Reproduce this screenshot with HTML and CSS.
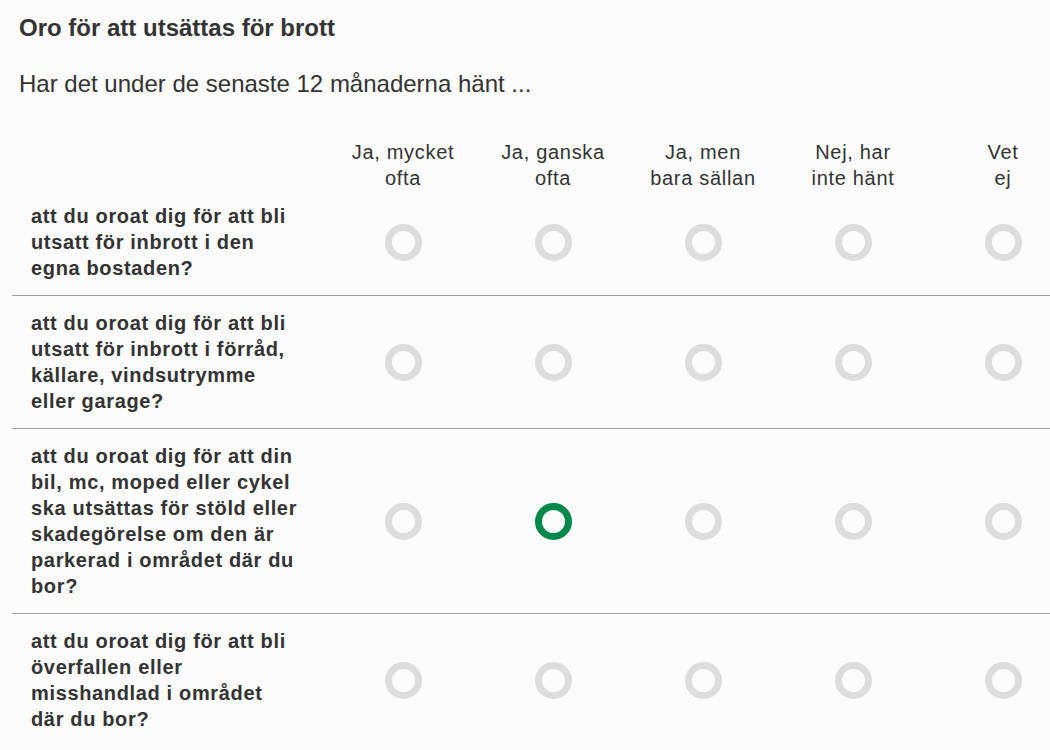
FILE: index.html
```html
<!DOCTYPE html>
<html lang="sv">
<head>
<meta charset="utf-8">
<title>Oro för att utsättas för brott</title>
<link rel="stylesheet" href="styles.css">
</head>
<body>
<div class="page">
  <h1 class="title">Oro för att utsättas för brott</h1>
  <p class="lead">Har det under de senaste 12 månaderna hänt ...</p>
  <div class="matrix">
    <div class="row head">
      <div class="label"></div>
      <div class="opt">Ja, mycket<br>ofta</div>
      <div class="opt">Ja, ganska<br>ofta</div>
      <div class="opt">Ja, men<br>bara sällan</div>
      <div class="opt">Nej, har<br>inte hänt</div>
      <div class="opt">Vet<br>ej</div>
    </div>
    <div class="row">
      <div class="label">att du oroat dig för att bli utsatt för inbrott i den egna bostaden?</div>
      <div class="cell"><span class="radio"></span></div>
      <div class="cell"><span class="radio"></span></div>
      <div class="cell"><span class="radio"></span></div>
      <div class="cell"><span class="radio"></span></div>
      <div class="cell"><span class="radio"></span></div>
    </div>
    <div class="row">
      <div class="label">att du oroat dig för att bli utsatt för inbrott i förråd, källare, vindsutrymme eller garage?</div>
      <div class="cell"><span class="radio"></span></div>
      <div class="cell"><span class="radio"></span></div>
      <div class="cell"><span class="radio"></span></div>
      <div class="cell"><span class="radio"></span></div>
      <div class="cell"><span class="radio"></span></div>
    </div>
    <div class="row">
      <div class="label">att du oroat dig för att din bil, mc, moped eller cykel ska utsättas för stöld eller skadegörelse om den är parkerad i området där du bor?</div>
      <div class="cell"><span class="radio"></span></div>
      <div class="cell"><span class="radio checked"></span></div>
      <div class="cell"><span class="radio"></span></div>
      <div class="cell"><span class="radio"></span></div>
      <div class="cell"><span class="radio"></span></div>
    </div>
    <div class="row">
      <div class="label">att du oroat dig för att bli överfallen eller misshandlad i området där du bor?</div>
      <div class="cell"><span class="radio"></span></div>
      <div class="cell"><span class="radio"></span></div>
      <div class="cell"><span class="radio"></span></div>
      <div class="cell"><span class="radio"></span></div>
      <div class="cell"><span class="radio"></span></div>
    </div>
  </div>
</div>
</body>
</html>
```

FILE: styles.css
```css
html, body {
  margin: 0;
  padding: 0;
  background: #fcfcfc;
  overflow: hidden;
}
body {
  font-family: "Liberation Sans", Arial, sans-serif;
  color: #333333;
  width: 1050px;
  height: 750px;
}
.page {
  padding: 15px 0 0 12px;
  width: 1100px;
}
.title {
  margin: 0 0 0 7px;
  font-size: 24px;
  line-height: 26px;
  font-weight: bold;
}
.lead {
  margin: 30px 0 0 7px;
  font-size: 24px;
  line-height: 26px;
}
.matrix {
  margin-top: 42px;
  width: 1066px;
}
.row {
  display: grid;
  grid-template-columns: 316px repeat(5, 150px);
  align-items: center;
  border-top: 1px solid #a0a0a0;
  padding: 14px 0 14px;
}
.row.head {
  border-top: none;
  padding: 0;
}
.row.head + .row {
  border-top: none;
  padding-top: 12px;
}
.opt {
  text-align: center;
  font-size: 20px;
  line-height: 26px;
  letter-spacing: 0.7px;
}
.label {
  padding: 0 29px 0 19px;
  font-size: 20px;
  line-height: 26px;
  font-weight: bold;
  letter-spacing: 0.65px;
}
.cell {
  display: flex;
  justify-content: center;
  align-items: center;
}
.radio {
  display: block;
  box-sizing: border-box;
  width: 37px;
  height: 37px;
  border-radius: 50%;
  border: 7px solid #dddddd;
}
.radio.checked {
  border-color: #00884b;
}
```
